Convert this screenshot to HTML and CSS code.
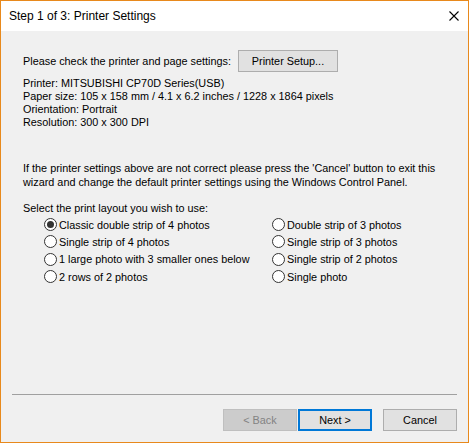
FILE: index.html
```html
<!DOCTYPE html>
<html lang="en">
<head>
<meta charset="UTF-8">
<title>Step 1 of 3: Printer Settings</title>
<link rel="stylesheet" href="styles.css">
</head>
<body>

<div class="window">
  <div class="titlebar">
    <span class="title">Step 1 of 3: Printer Settings</span>
    <svg class="close" width="10" height="10" viewBox="0 0 10 10">
      <path d="M0.5 0.5 L9.5 9.5 M9.5 0.5 L0.5 9.5" stroke="#000" stroke-width="1.1" fill="none"/>
    </svg>
  </div>

  <div class="content">
    <div class="setup-row">
      <span>Please check the printer and page settings:</span>
      <button class="btn setup-btn">Printer Setup...</button>
    </div>

    <div class="info">
      <div>Printer: MITSUBISHI CP70D Series(USB)</div>
      <div>Paper size: 105 x 158 mm / 4.1 x 6.2 inches / 1228 x 1864 pixels</div>
      <div>Orientation: Portrait</div>
      <div>Resolution: 300 x 300 DPI</div>
    </div>

    <p class="note">If the printer settings above are not correct please press the 'Cancel' button to exit this wizard and change the default printer settings using the Windows Control Panel.</p>

    <div class="layout-label">Select the print layout you wish to use:</div>
    <div class="layouts">
      <label class="option"><input type="radio" name="layout" checked>Classic double strip of 4 photos</label>
      <label class="option"><input type="radio" name="layout">Double strip of 3 photos</label>
      <label class="option"><input type="radio" name="layout">Single strip of 4 photos</label>
      <label class="option"><input type="radio" name="layout">Single strip of 3 photos</label>
      <label class="option"><input type="radio" name="layout">1 large photo with 3 smaller ones below</label>
      <label class="option"><input type="radio" name="layout">Single strip of 2 photos</label>
      <label class="option"><input type="radio" name="layout">2 rows of 2 photos</label>
      <label class="option"><input type="radio" name="layout">Single photo</label>
    </div>
  </div>

  <div class="footer">
    <hr class="separator">
    <div class="buttons">
      <button class="btn" disabled>&lt; Back</button>
      <button class="btn default">Next &gt;</button>
      <button class="btn cancel">Cancel</button>
    </div>
  </div>
</div>

</body>
</html>
```

FILE: styles.css
```css
body {
  margin: 0;
  padding: 0;
  background-color: #f0f0f0;
  font-family: "Liberation Sans", Arial, sans-serif;
  font-size: 10.85px;
  color: #000;
}
.window {
  width: 469px;
  height: 443px;
  box-sizing: border-box;
  border: 1px solid #e8891c;
  background-color: #f0f0f0;
  display: flex;
  flex-direction: column;
}
.titlebar {
  height: 30px;
  background-color: #fff;
  display: flex;
  align-items: center;
  justify-content: space-between;
  padding: 0 9px 0 8px;
  flex-shrink: 0;
}
.title {
  font-size: 12px;
  padding-bottom: 1px;
}
.close {
  display: block;
  margin-bottom: 1px;
}
.content {
  flex: 1;
  padding: 19px 22px 0 22px;
}
.setup-row {
  display: flex;
  align-items: center;
  gap: 7px;
}
.btn {
  font-family: "Liberation Sans", Arial, sans-serif;
  font-size: 10.85px;
  color: #000;
  height: 22px;
  padding: 0;
  background-color: #e1e1e1;
  border: 1px solid #adadad;
  box-sizing: border-box;
}
.setup-btn {
  width: 100px;
}
.info {
  margin-top: 5px;
  line-height: 13px;
}
.note {
  margin: 32px 0 0 0;
  line-height: 14px;
}
.layout-label {
  margin-top: 12px;
  line-height: 14px;
}
.layouts {
  display: grid;
  grid-template-columns: 228px auto;
  grid-auto-rows: 17.33px;
  padding-left: 21px;
  margin-top: 1px;
}
.option {
  display: flex;
  align-items: center;
  gap: 2px;
}
.option input {
  appearance: none;
  -webkit-appearance: none;
  width: 13px;
  height: 13px;
  margin: 0;
  border: 1px solid #333;
  border-radius: 50%;
  background-color: #fff;
  box-sizing: border-box;
  display: grid;
  place-items: center;
}
.option input:checked::before {
  content: "";
  width: 7px;
  height: 7px;
  border-radius: 50%;
  background-color: #333;
}
.footer {
  padding: 0 11px 11px 11px;
}
.separator {
  margin: 0;
  border: none;
  border-top: 1px solid #a0a0a0;
  height: 0;
}
.buttons {
  display: flex;
  justify-content: flex-end;
  margin-top: 14px;
}
.buttons .btn {
  width: 74px;
}
.buttons .btn[disabled] {
  background-color: #cccccc;
  border-color: #bfbfbf;
  color: #838383;
  margin-right: 1px;
}
.buttons .default {
  border: 2px solid #0078d7;
}
.buttons .cancel {
  margin-left: 11px;
}
```
